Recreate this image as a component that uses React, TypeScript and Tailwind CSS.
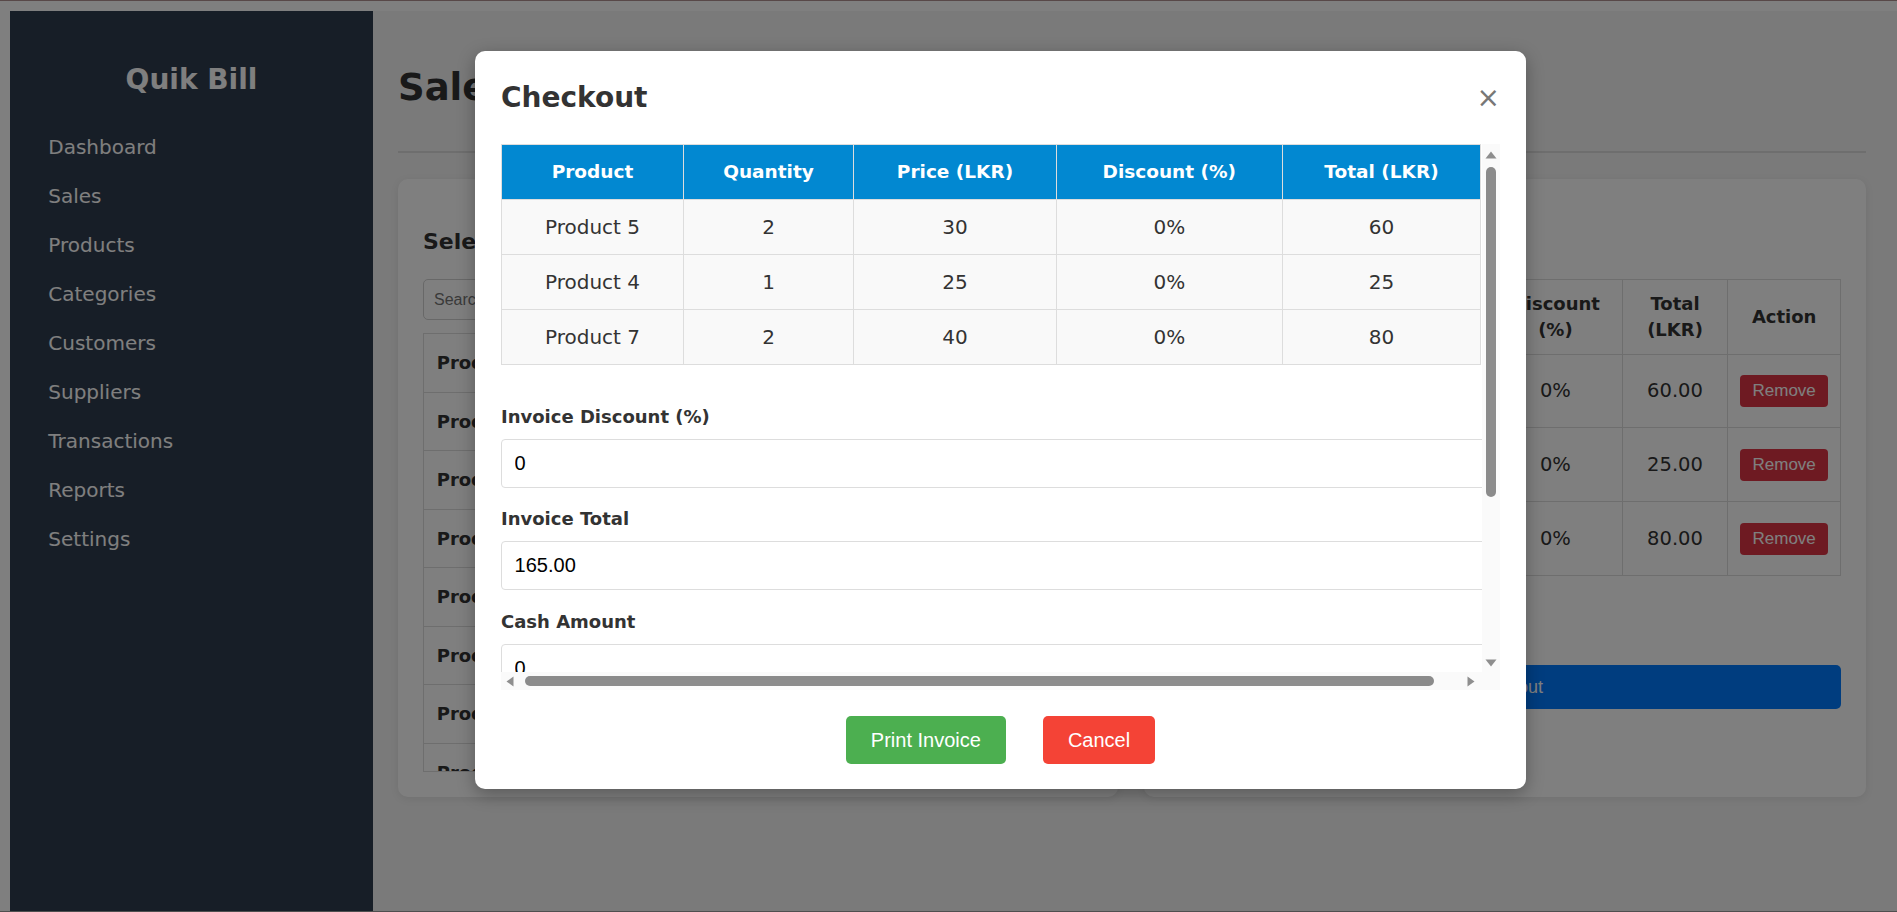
import React from "react";

const nav = ["Dashboard", "Sales", "Products", "Categories", "Customers", "Suppliers", "Transactions", "Reports", "Settings"];
const products = ["Product 1", "Product 2", "Product 3", "Product 4", "Product 5", "Product 6", "Product 7", "Product 8", "Product 9"];
const cart = [
  { name: "Product 5", qty: 2, price: 30, total: 60 },
  { name: "Product 4", qty: 1, price: 25, total: 25 },
  { name: "Product 7", qty: 2, price: 40, total: 80 },
];

function TriUp() {
  return (
    <svg width="12" height="8" viewBox="0 0 12 8"><path d="M6 0.5 L11.5 7.5 L0.5 7.5 Z" fill="#8e8e8e" /></svg>
  );
}
function TriDown() {
  return (
    <svg width="12" height="8" viewBox="0 0 12 8"><path d="M0.5 0.5 L11.5 0.5 L6 7.5 Z" fill="#8e8e8e" /></svg>
  );
}
function TriLeft() {
  return (
    <svg width="8" height="11" viewBox="0 0 8 11"><path d="M0.5 5.5 L7.5 0.5 L7.5 10.5 Z" fill="#8e8e8e" /></svg>
  );
}
function TriRight() {
  return (
    <svg width="8" height="11" viewBox="0 0 8 11"><path d="M0.5 0.5 L7.5 5.5 L0.5 10.5 Z" fill="#8e8e8e" /></svg>
  );
}

export default function App() {
  const modalHeaders = ["Product", "Quantity", "Price (LKR)", "Discount (%)", "Total (LKR)"];
  const fields = [
    { label: "Invoice Discount (%)", value: "0" },
    { label: "Invoice Total", value: "165.00" },
    { label: "Cash Amount", value: "0" },
    { label: "Balance", value: "0.00" },
  ];
  return (
    <div className="w-full h-[912px] overflow-hidden flex flex-col bg-white font-['DejaVu_Sans',sans-serif]">
      <div className="h-px shrink-0 bg-[#584848]" />
      <div className="relative flex-1 min-h-0 overflow-hidden bg-white">
        {/* page */}
        <div className="flex h-full pl-[10px] pt-[10px]">
          <aside className="w-[363px] shrink-0 bg-[#2f3c4e] pt-[51.6px]">
            <div className="text-center text-[28px] leading-[34px] font-bold text-white">Quik Bill</div>
            <nav className="mt-[26.3px] pl-[38.3px] flex flex-col">
              {nav.map((n) => (
                <div key={n} className="py-[12px] text-[20px] leading-[25px] text-white">{n}</div>
              ))}
            </nav>
          </aside>
          <main className="flex-1 bg-[#f4f4f4] pl-[25px] pr-[31px] flex flex-col">
            <h1 className="mt-[54px] text-[37px] leading-[46px] font-bold text-[#333]">Sales</h1>
            <div className="mt-[40px] h-[2px] bg-[#dddddd]" />
            <div className="mt-[26px] flex gap-[26px] h-[618px]">
              <section className="flex-1 bg-white rounded-[10px] shadow-[0_2px_8px_rgba(0,0,0,0.08)] p-[25px] flex flex-col">
                <h3 className="mt-[24px] text-[22px] leading-[27px] font-bold text-[#333]">Select Products</h3>
                <input
                  readOnly
                  placeholder="Search products..."
                  className="mt-[24px] h-[41px] w-full border border-[#d0d0d0] rounded-[5px] px-[10px] font-['Liberation_Sans',Arial,sans-serif] text-[16px] text-[#333] placeholder:text-[#757575] outline-none"
                />
                <div className="mt-[13px] h-[438.5px] border border-[#dddddd] overflow-hidden">
                  {products.map((p) => (
                    <div key={p} className="px-[12.7px] py-[17px] leading-[23.5px] border-b border-[#dddddd] text-[18px] font-bold text-[#333]">
                      {p} - LKR 10.00
                    </div>
                  ))}
                </div>
              </section>
              <section className="flex-1 bg-white rounded-[10px] shadow-[0_2px_8px_rgba(0,0,0,0.08)] p-[25px] flex flex-col">
                <h3 className="mt-[24px] text-[22px] leading-[27px] font-bold text-[#333]">Cart</h3>
                <table className="mt-[24.3px] w-full table-fixed border-collapse text-center text-[#333]">
                  <colgroup>
                    <col className="w-[115px]" />
                    <col className="w-[100px]" />
                    <col className="w-[104px]" />
                    <col className="w-[133.7px]" />
                    <col className="w-[105.6px]" />
                    <col className="w-[112.7px]" />
                  </colgroup>
                  <thead>
                    <tr className="h-[74.3px]">
                      {["Product", "Quantity", "Price (LKR)", "Discount (%)", "Total (LKR)", "Action"].map((h) => (
                        <th key={h} className="border border-[#dddddd] px-[8px] py-[10px] text-[18px] leading-[26px] font-bold">{h}</th>
                      ))}
                    </tr>
                  </thead>
                  <tbody>
                    {cart.map((r) => (
                      <tr key={r.name} className="h-[73.8px]">
                        <td className="border border-[#dddddd] text-[19.5px]">{r.name}</td>
                        <td className="border border-[#dddddd] text-[19.5px]">{r.qty}</td>
                        <td className="border border-[#dddddd] text-[19.5px]">{r.price.toFixed(2)}</td>
                        <td className="border border-[#dddddd] text-[19.5px]">0%</td>
                        <td className="border border-[#dddddd] text-[19.5px]">{r.total.toFixed(2)}</td>
                        <td className="border border-[#dddddd]">
                          <button className="h-[32px] px-[12.5px] rounded-[4px] bg-[#dc3545] text-white text-[17px] leading-[20px] font-['Liberation_Sans',Arial,sans-serif]">Remove</button>
                        </td>
                      </tr>
                    ))}
                  </tbody>
                </table>
                <div className="mt-[30px] h-[27px] text-[20px] leading-[27px] font-bold text-[#333]">Total: LKR 165.00</div>
                <button className="mt-[32px] h-[44.3px] w-full rounded-[5px] bg-[#007bff] text-white text-[18px] font-['Liberation_Sans',Arial,sans-serif]">Checkout</button>
              </section>
            </div>
          </main>
        </div>

        {/* overlay */}
        <div className="absolute inset-0 bg-black/50" />

        {/* modal */}
        <div className="absolute left-[475px] top-[50px] w-[1051px] h-[738px] bg-white rounded-[10px] shadow-[0_5px_18px_rgba(0,0,0,0.3)] px-[26px] pt-[30px] pb-[25px] flex flex-col">
          <div className="flex items-center justify-between h-[34px]">
            <h2 className="text-[28px] leading-[34px] font-bold text-[#333]">Checkout</h2>
            <span className="text-[28px] leading-[34px] text-[#777]">×</span>
          </div>
          <div className="mt-[29px] flex flex-col w-[999px]">
            <div className="flex h-[528px]">
              <div className="w-[981px] h-[528px] overflow-hidden">
                <table className="w-[979.4px] table-fixed border-collapse text-center">
                  <colgroup>
                    <col className="w-[182px]" />
                    <col className="w-[170px]" />
                    <col className="w-[203px]" />
                    <col className="w-[225.6px]" />
                    <col className="w-[198.8px]" />
                  </colgroup>
                  <thead>
                    <tr className="h-[55px] bg-[#0288d1]">
                      {modalHeaders.map((h) => (
                        <th key={h} className="border border-[#dddddd] p-0 text-white text-[18.5px] font-bold">{h}</th>
                      ))}
                    </tr>
                  </thead>
                  <tbody>
                    {cart.map((r) => (
                      <tr key={r.name} className="h-[55px] bg-[#f9f9f9]">
                        <td className="border border-[#dddddd] p-0 text-[20px] text-[#333]">{r.name}</td>
                        <td className="border border-[#dddddd] p-0 text-[20px] text-[#333]">{r.qty}</td>
                        <td className="border border-[#dddddd] p-0 text-[20px] text-[#333]">{r.price}</td>
                        <td className="border border-[#dddddd] p-0 text-[20px] text-[#333]">0%</td>
                        <td className="border border-[#dddddd] p-0 text-[20px] text-[#333]">{r.total}</td>
                      </tr>
                    ))}
                  </tbody>
                </table>
                <div className="mt-[40.5px] flex flex-col">
                  {fields.map((f, i) => (
                    <div key={f.label} className={i === 0 ? "flex flex-col" : "mt-[20.7px] flex flex-col"}>
                      <div className="text-[18px] leading-[22px] font-bold text-[#333]">{f.label}</div>
                      <input
                        readOnly
                        value={f.value}
                        className="mt-[11px] w-[1021px] h-[49px] shrink-0 border border-[#dddddd] rounded-[4px] pl-[12.6px] font-['Liberation_Sans',Arial,sans-serif] text-[20px] text-black outline-none"
                      />
                    </div>
                  ))}
                </div>
              </div>
              <div className="w-[18px] bg-[#fafafa] flex flex-col items-center pt-[7px] pb-[5px]">
                <TriUp />
                <div className="mt-[7.7px] w-[10.5px] h-[330px] rounded-full bg-[#8b8b8b]" />
                <div className="flex-1" />
                <TriDown />
              </div>
            </div>
            <div className="flex h-[18px]">
              <div className="w-[981px] bg-[#fafafa] flex items-center pl-[4.7px] pr-[7px]">
                <TriLeft />
                <div className="ml-[10.9px] w-[909.4px] h-[10.7px] rounded-full bg-[#8b8b8b]" />
                <div className="flex-1" />
                <TriRight />
              </div>
              <div className="w-[18px] bg-[#fafafa]" />
            </div>
          </div>
          <div className="mt-[26px] flex justify-center gap-[37px]">
            <button className="h-[48px] px-[25px] rounded-[5px] bg-[#4caf50] text-white text-[20px] font-['Liberation_Sans',Arial,sans-serif]">Print Invoice</button>
            <button className="h-[48px] px-[25px] rounded-[5px] bg-[#f44336] text-white text-[20px] font-['Liberation_Sans',Arial,sans-serif]">Cancel</button>
          </div>
        </div>
      </div>
      <div className="h-px shrink-0 bg-[#4f4f4f]" />
    </div>
  );
}
